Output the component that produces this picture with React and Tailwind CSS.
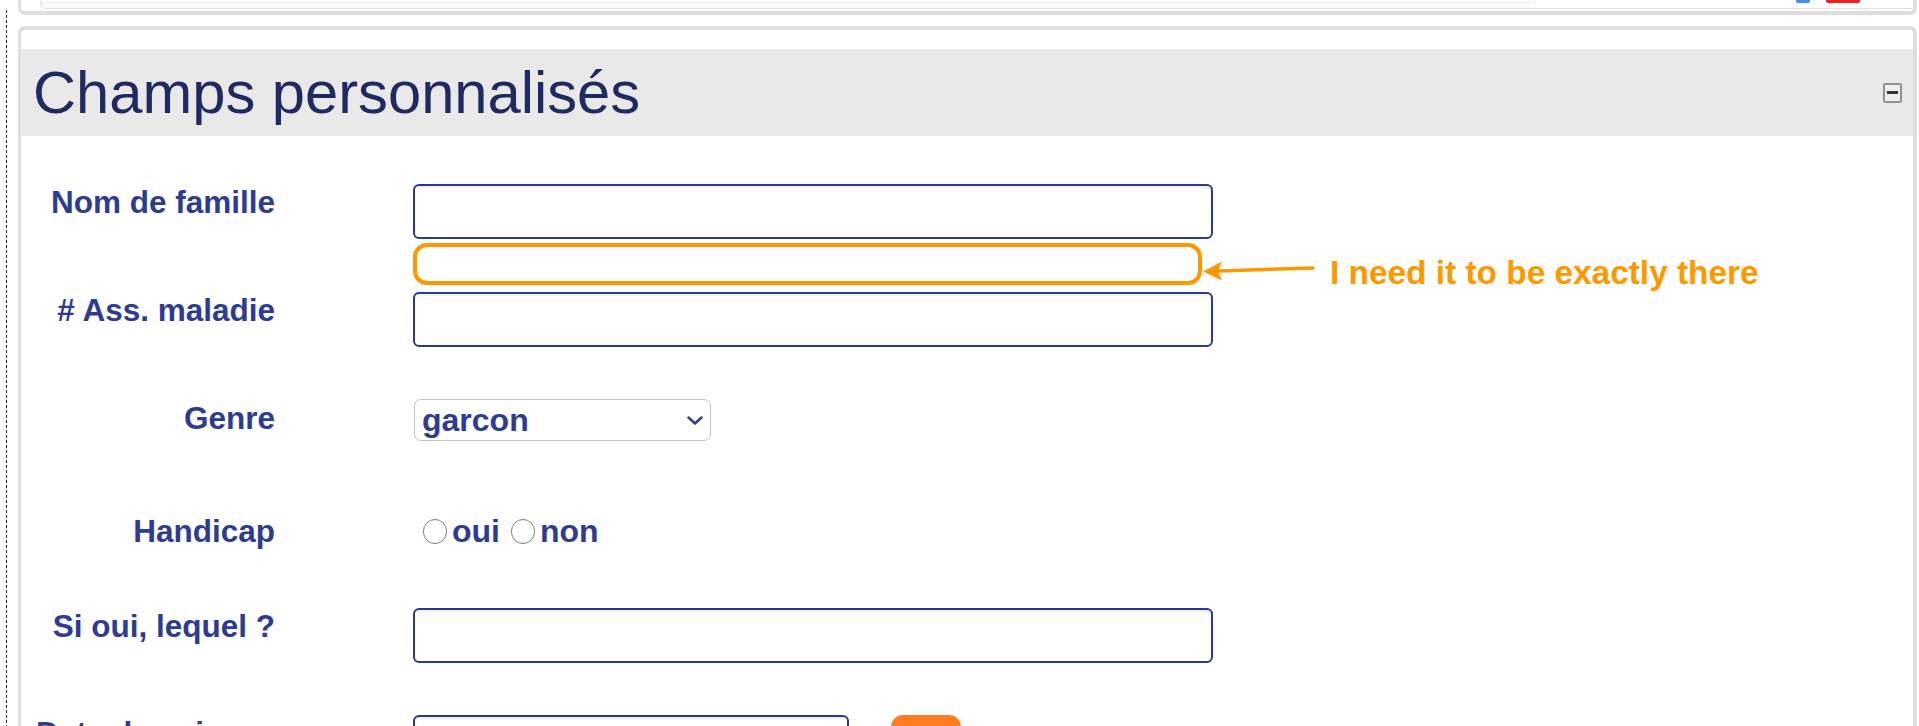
export default function App() {
  const label =
    "w-[254px] shrink-0 pl-[15px] text-right whitespace-nowrap text-[31.5px] leading-[36px] font-bold text-[#2e3b93]";
  const input =
    "h-[55px] border-2 border-[#2d3a8c] rounded-[6px] bg-white shadow-[inset_0_2px_2px_rgba(0,0,0,0.06)]";
  return (
    <div className="h-[726px] w-[1919px] overflow-hidden bg-white flex font-['Liberation_Sans',Arial,sans-serif]">
      <div className="w-[6px] shrink-0" />
      <div className="w-px shrink-0 mt-[10px] bg-[repeating-linear-gradient(to_bottom,#222222_0px,#222222_3px,transparent_3px,transparent_5px)]" />
      <div className="flex-1 flex flex-col min-w-0">
        {/* bottom of previous panel */}
        <div className="ml-[11px] mr-[2px] h-[15px] shrink-0 border-l-[3px] border-r-[4px] border-b-[4px] border-[#dedede] rounded-b-[7px]">
          <div className="ml-[19px] h-[9px] border-l border-b border-[#e2e2e2] rounded-bl-[5px] flex items-start">
            <div className="w-[1495px] h-[3px] border-b border-r border-[#ececec] rounded-br-[3px]" />
            <div className="ml-[260px] w-[14px] h-[3px] bg-[#4a8cf0] rounded-b-[2px]" />
            <div className="ml-[16px] w-[34px] h-[3px] bg-[#e8231b] rounded-b-[2px]" />
          </div>
        </div>

        {/* panel */}
        <div className="mt-[11px] ml-[11px] mr-[2px] flex-1 border-t-[4px] border-l-[3px] border-r-[4px] border-[#dedede] rounded-t-[7px] pt-[19px]">
          <div className="h-[87px] bg-[#e9e9e9] flex items-center justify-between pl-[12px] pr-[11px]">
            <h1 className="text-[59.7px] leading-[69px] font-normal text-[#1f2a62]">
              Champs personnalisés
            </h1>
            <div className="w-[19px] h-[20px] border-2 border-[#929292] bg-[#efefef] rounded-[2px] flex items-center justify-center">
              <div className="w-[11px] h-[3px] bg-[#333333]" />
            </div>
          </div>

          <div className="flex flex-col">
            {/* Nom de famille */}
            <div className="mt-[48px] flex items-start">
              <div className={label}>Nom de famille</div>
              <div className="ml-[138px]">
                <div className={`${input} w-[800px]`} />
              </div>
            </div>

            {/* annotation */}
            <div className="mt-[4px] h-[42px] flex items-start ml-[392px]">
              <div className="w-[789px] h-[42px] border-[4px] border-[#ff9800] rounded-[14px] shrink-0" />
              <svg width="128" height="42" viewBox="0 0 128 42" className="shrink-0">
                <line x1="17" y1="28" x2="111" y2="25" stroke="#ff9800" strokeWidth="3.5" strokeLinecap="round" />
                <path d="M1 28.5 L20 18.5 L16 28 L20 37.5 Z" fill="#ff9800" />
              </svg>
              <div className="mt-[11px] whitespace-nowrap text-[33.4px] leading-[38px] font-bold text-[#ff9800]">
                I need it to be exactly there
              </div>
            </div>

            {/* Ass. maladie */}
            <div className="mt-[7px] flex items-start">
              <div className={label}># Ass. maladie</div>
              <div className="ml-[138px]">
                <div className={`${input} w-[800px]`} />
              </div>
            </div>

            {/* Genre */}
            <div className="mt-[52px] flex items-start">
              <div className={`${label} mt-px`}>Genre</div>
              <div className="ml-[139px]">
                <div className="w-[297px] h-[42px] border-[1.5px] border-[#c4c4c4] rounded-[7px] bg-white flex items-center justify-between pl-[7px] pr-[7px]">
                  <span className="text-[32px] leading-[36px] font-bold text-[#2e3b93]">garcon</span>
                  <svg width="16" height="9" viewBox="0 0 16 9">
                    <path d="M1.5 1.5 L8 7.5 L14.5 1.5" fill="none" stroke="#2e3b93" strokeWidth="2.4" strokeLinecap="round" strokeLinejoin="round" />
                  </svg>
                </div>
              </div>
            </div>

            {/* Handicap */}
            <div className="mt-[72px] flex items-start">
              <div className={label}>Handicap</div>
              <div className="ml-[148px] h-[36px] flex items-center text-[32px] leading-[36px] font-bold text-[#2e3b93]">
                <span className="w-[24px] h-[25px] rounded-full border-[1.5px] border-[#7d7d7d] bg-white shrink-0" />
                <span className="ml-[5px]">oui</span>
                <span className="ml-[11px] w-[24px] h-[25px] rounded-full border-[1.5px] border-[#7d7d7d] bg-white shrink-0" />
                <span className="ml-[5px]">non</span>
              </div>
            </div>

            {/* Si oui */}
            <div className="mt-[59px] flex items-start">
              <div className={label}>Si oui, lequel ?</div>
              <div className="ml-[138px]">
                <div className={`${input} w-[800px]`} />
              </div>
            </div>

            {/* Date de naissance */}
            <div className="mt-[52px] flex items-start">
              <div className={label}>Date de naissance</div>
              <div className="ml-[138px] flex items-start">
                <div className={`${input} w-[436px]`} />
                <div className="ml-[42px] w-[70px] h-[50px] bg-[#ff7d1f] rounded-[12px]" />
              </div>
            </div>
          </div>
        </div>
      </div>
    </div>
  );
}
